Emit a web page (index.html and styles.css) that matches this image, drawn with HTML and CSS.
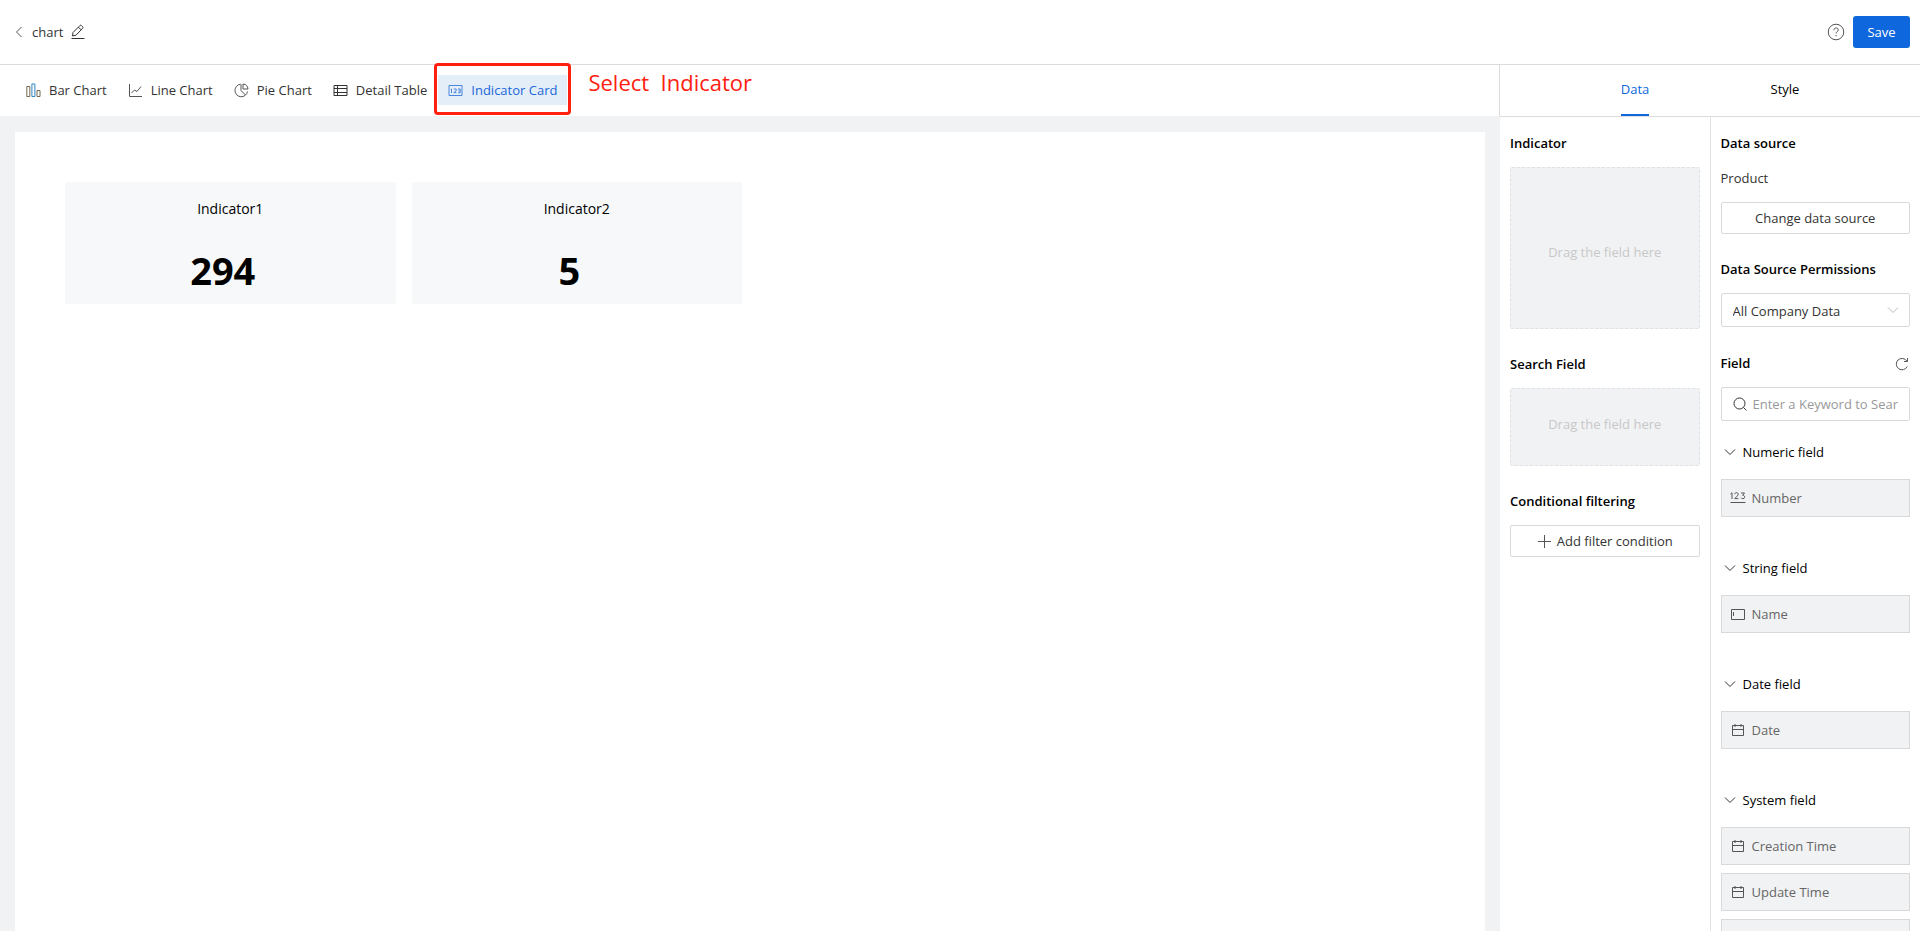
FILE: index.html
```html
<!DOCTYPE html>
<html lang="en">
<head>
    <meta charset="UTF-8">
    <meta name="viewport" content="width=device-width, initial-scale=1.0">
    <title>chart</title>
    <link rel="stylesheet" href="styles.css">
</head>
<body>
    <!-- shared icons -->
    <svg class="sprite" aria-hidden="true">
        <symbol id="icon-down" viewBox="0 0 12 12"><path d="M1 3.5l5 5 5-5"/></symbol>
        <symbol id="icon-calendar" viewBox="0 0 14 14"><path d="M1.5 2.5h11v10h-11zM1.5 6.5h11M4 1v3M10 1v3"/></symbol>
    </svg>

    <header class="header">
        <button class="icon-button" aria-label="Back">
            <svg class="icon" width="8" height="12" viewBox="0 0 8 12"><path d="M6.5 1L1.5 6l5 5"/></svg>
        </button>
        <span class="header-title">chart</span>
        <button class="icon-button" aria-label="Rename">
            <svg class="icon icon-dark" width="14" height="16" viewBox="0 0 14 16"><path d="M1.500 12l.5-3.500L9 1.500q.7-.7 1.400 0l1.300 1.300q.7.7 0 1.400L5 11.200zM7.500 3.200l2.600 2.600M.5 14.500h13"/></svg>
        </button>
        <div class="header-actions">
            <button class="icon-button" aria-label="Help">
                <svg class="icon" width="18" height="18" viewBox="0 0 18 18"><circle cx="9" cy="9" r="7.800"/><path d="M6.800 7.200c0-3 4.500-2.900 4.500-.3 0 1.700-2.200 1.700-2.200 3.600M9.100 12v1.300"/></svg>
            </button>
            <button class="save-button">Save</button>
        </div>
    </header>

    <div class="workspace">
        <main class="main">
            <nav class="toolbar">
                <button class="chart-type">
                    <svg class="icon" width="15" height="15" viewBox="0 0 15 15"><path class="bar-side" d="M.800 3.500h3v10h-3zM11 7.500h3v6h-3z"/><path class="bar-mid" d="M5.900 1h3v12.500h-3z"/></svg>
                    Bar Chart
                </button>
                <button class="chart-type">
                    <svg class="icon" width="15" height="15" viewBox="0 0 15 15"><path d="M1.500 1v12.500H14M3.500 10l3-3 2.500 1.500 4-5"/></svg>
                    Line Chart
                </button>
                <button class="chart-type">
                    <svg class="icon" width="15" height="15" viewBox="0 0 15 15"><path d="M13.500 8.500A6.300 6.300 0 1 1 6.500 1.200M7 1.200v6.300l4.500 4.500M9 1a5.500 5.500 0 0 1 5 5H9z"/></svg>
                    Pie Chart
                </button>
                <button class="chart-type">
                    <svg class="icon icon-dark" width="15" height="15" viewBox="0 0 15 15"><path d="M1 2.500h13v10H1zM1 5.500h13M1 9.500h13M4.500 2.500v10"/></svg>
                    Detail Table
                </button>
                <div class="callout">
                    <button class="chart-type active">
                        <svg class="icon" width="15" height="15" viewBox="0 0 15 15"><path d="M1 2.500h13v10H1zM3.500 6v4M2.800 6.500l.7-.5M5.800 6h2.400v1.800L5.800 9.700h2.600M10 6h2.200v3.800H10M10.500 7.800h1.700"/></svg>
                        Indicator Card
                    </button>
                    <span class="callout-frame"></span>
                    <span class="callout-text">Select  Indicator</span>
                </div>
            </nav>
            <div class="canvas">
                <section class="sheet">
                    <article class="card">
                        <h2 class="card-name">Indicator1</h2>
                        <p class="card-value">294</p>
                    </article>
                    <article class="card">
                        <h2 class="card-name">Indicator2</h2>
                        <p class="card-value">5</p>
                    </article>
                </section>
            </div>
        </main>

        <aside class="panel">
            <div class="tabs" role="tablist">
                <button class="tab" role="tab" aria-selected="true"><span class="tab-label">Data</span></button>
                <button class="tab" role="tab" aria-selected="false"><span class="tab-label">Style</span></button>
            </div>
            <div class="panel-columns">
                <div class="column">
                    <h3 class="title">Indicator</h3>
                    <div class="drop-zone drop-zone-large">Drag the field here</div>
                    <h3 class="title">Search Field</h3>
                    <div class="drop-zone">Drag the field here</div>
                    <h3 class="title">Conditional filtering</h3>
                    <button class="button">
                        <svg class="icon" width="14" height="14" viewBox="0 0 14 14"><path d="M7.500 1v13M1 7.500h13"/></svg>
                        Add filter condition
                    </button>
                </div>

                <div class="column column-source">
                    <h3 class="title">Data source</h3>
                    <p class="source-name">Product</p>
                    <button class="button">Change data source</button>
                    <label class="title" for="permissions">Data Source Permissions</label>
                    <div class="select-box">
                        <select id="permissions" class="select">
                            <option>All Company Data</option>
                        </select>
                        <svg class="icon select-arrow" width="12" height="12"><use href="#icon-down"/></svg>
                    </div>
                    <div class="title title-row">
                        <label for="search">Field</label>
                        <button class="icon-button" aria-label="Refresh">
                            <svg class="icon" width="14" height="14" viewBox="0 0 14 14"><path d="M12.200 9.500A5.700 5.700 0 1 1 11.800 4M12.500 1v3.500H9"/></svg>
                        </button>
                    </div>
                    <div class="search-box">
                        <svg class="icon icon-dark" width="14" height="14" viewBox="0 0 14 14"><circle cx="6.500" cy="6.500" r="5.500"/><path d="M10.500 10.500l3 3"/></svg>
                        <input id="search" class="search-input" type="text" placeholder="Enter a Keyword to Search">
                    </div>

                    <section class="group">
                        <button class="group-title"><svg class="icon icon-dark" width="12" height="12"><use href="#icon-down"/></svg>Numeric field</button>
                        <div class="field">
                            <svg class="icon" width="16" height="14" viewBox="0 0 16 14"><path d="M.5 3l1.500-1.200V8M4.800 3.200c0-2.200 3.400-2 3.400 0C8.200 4.500 6 6 4.800 7.600h3.600M11 2h3.500L12.600 4.300c2.800 0 2.600 3.400.3 3.400q-1.400 0-1.900-1M.5 11.500h15"/></svg>
                            Number
                        </div>
                    </section>
                    <section class="group">
                        <button class="group-title"><svg class="icon icon-dark" width="12" height="12"><use href="#icon-down"/></svg>String field</button>
                        <div class="field">
                            <svg class="icon" width="16" height="14" viewBox="0 0 16 14"><path d="M1.500 2.500h13v10h-13zM3.500 5v4"/></svg>
                            Name
                        </div>
                    </section>
                    <section class="group">
                        <button class="group-title"><svg class="icon icon-dark" width="12" height="12"><use href="#icon-down"/></svg>Date field</button>
                        <div class="field"><svg class="icon" width="16" height="14"><use href="#icon-calendar"/></svg>Date</div>
                    </section>
                    <section class="group">
                        <button class="group-title"><svg class="icon icon-dark" width="12" height="12"><use href="#icon-down"/></svg>System field</button>
                        <div class="field"><svg class="icon" width="16" height="14"><use href="#icon-calendar"/></svg>Creation Time</div>
                        <div class="field"><svg class="icon" width="16" height="14"><use href="#icon-calendar"/></svg>Update Time</div>
                        <div class="field"></div>
                    </section>
                </div>
            </div>
        </aside>
    </div>
</body>
</html>
```

FILE: styles.css
```css
* {
    box-sizing: border-box;
}
body {
    margin: 0;
    height: 100vh;
    display: flex;
    flex-direction: column;
    overflow: hidden;
    font-family: "Open Sans", "Noto Sans", sans-serif;
    font-size: 13px;
    line-height: 20px;
    color: #333;
    background: #fff;
}
button, input, select {
    font: inherit;
    color: inherit;
}
button {
    cursor: pointer;
}
h2, h3, p {
    margin: 0;
}
.sprite {
    position: absolute;
    width: 0;
    height: 0;
}
.icon {
    display: block;
    flex: none;
    fill: none;
    stroke: #555;
}
.icon-dark {
    stroke: #333;
}
.icon-button {
    padding: 0;
    border: none;
    background: none;
}

/* header */
.header {
    flex: none;
    display: flex;
    align-items: center;
    gap: 8px;
    height: 65px;
    padding: 0 10px 0 15px;
    border-bottom: 1px solid #dcdcdc;
}
.header-title {
    margin-left: 1px;
}
.header-actions {
    display: flex;
    align-items: center;
    gap: 8px;
    margin-left: auto;
}
.save-button {
    min-width: 57px;
    height: 32px;
    padding: 0 14px;
    border: none;
    border-radius: 3px;
    background: #0e67dc;
    color: #fff;
}

.workspace {
    flex: 1;
    display: flex;
    min-height: 0;
}
.main {
    flex: 1;
    display: flex;
    flex-direction: column;
    min-width: 0;
}

/* chart type toolbar */
.toolbar {
    flex: none;
    display: flex;
    align-items: center;
    gap: 1px;
    height: 51px;
    padding: 0 0 1px 16px;
    border-right: 1px solid #dcdcdc;
}
.chart-type {
    display: flex;
    align-items: center;
    gap: 8px;
    height: 30px;
    padding: 0 10px;
    border: none;
    background: none;
    white-space: nowrap;
}
.chart-type.active {
    background: #e4eef9;
    color: #1a66d9;
}
.chart-type.active .icon {
    stroke: #4a86e0;
}
.bar-side {
    stroke: #75674f;
}
.bar-mid {
    stroke: #2f86c4;
}
.callout {
    position: relative;
}
.callout-frame {
    position: absolute;
    inset: -12px -4px -10px;
    border: 3px solid #ff2010;
    border-radius: 4px;
    pointer-events: none;
}
.callout-text {
    position: absolute;
    left: 100%;
    top: -8px;
    margin-left: 21px;
    font-size: 22px;
    line-height: 30px;
    color: #ff2010;
    white-space: pre;
}

/* canvas */
.canvas {
    flex: 1;
    display: flex;
    padding: 16px 15px 0;
    background: #f1f2f4;
}
.sheet {
    flex: 1;
    display: grid;
    grid-template-columns: repeat(4, 1fr);
    align-content: start;
    gap: 16px;
    padding: 50px;
    background: #fff;
}
.card {
    height: 122px;
    padding-top: 16px;
    border-radius: 2px;
    background: #f6f8fa;
    color: #000;
    text-align: center;
}
.card-name {
    font-size: 14px;
    font-weight: 400;
    line-height: 22px;
}
.card-value {
    margin-top: 26px;
    padding-right: 15px;
    font-size: 38px;
    font-weight: 700;
    line-height: 48px;
}

/* settings panel */
.panel {
    flex: none;
    display: flex;
    flex-direction: column;
    width: 420px;
}
.tabs {
    flex: none;
    display: flex;
    justify-content: center;
    height: 52px;
    border-bottom: 1px solid #dcdcdc;
}
.tab {
    display: flex;
    justify-content: center;
    width: 150px;
    padding: 0;
    border: none;
    background: none;
    color: #000;
}
.tab-label {
    height: 51px;
    line-height: 49px;
    border-bottom: 2px solid transparent;
}
.tab[aria-selected="true"] .tab-label {
    color: #0e67dc;
    border-color: #0e67dc;
}
.panel-columns {
    flex: 1;
    display: flex;
    min-height: 0;
}
.column {
    flex: 1;
    display: flex;
    flex-direction: column;
    min-width: 0;
    padding: 16px 10px 0;
    overflow: hidden;
}
.column-source {
    border-left: 1px solid #e2e3e8;
}
.title {
    flex: none;
    margin-bottom: 13px;
    font-size: 13px;
    font-weight: 600;
    line-height: 21px;
    color: #000;
}
.title-row {
    display: flex;
    align-items: center;
    justify-content: space-between;
    padding-right: 1px;
}
.drop-zone {
    flex: none;
    display: flex;
    align-items: center;
    justify-content: center;
    height: 78px;
    margin-bottom: 25px;
    padding-bottom: 6px;
    border: 1px dashed #e0e1e6;
    border-radius: 2px;
    background: #f1f2f4;
    color: #c8c8c8;
}
.drop-zone-large {
    height: 162px;
    padding: 8px 0 0;
}
.button {
    flex: none;
    display: flex;
    align-items: center;
    justify-content: center;
    gap: 6px;
    height: 32px;
    border: 1px solid #d9d9d9;
    border-radius: 2px;
    background: #fff;
}
.source-name {
    margin-bottom: 13px;
    line-height: 22px;
}
.column-source .button {
    margin-bottom: 25px;
}
.select-box {
    flex: none;
    display: grid;
    align-items: center;
    height: 34px;
    margin-bottom: 26px;
}
.select {
    grid-area: 1 / 1;
    height: 34px;
    padding: 2px 11px 0;
    border: 1px solid #d9d9d9;
    border-radius: 2px;
    background: #fff;
    appearance: none;
}
.select-arrow {
    grid-area: 1 / 1;
    justify-self: end;
    margin-right: 11px;
    stroke: #bbb;
    pointer-events: none;
}
.search-box {
    flex: none;
    display: flex;
    align-items: center;
    gap: 6px;
    height: 34px;
    padding: 0 11px;
    border: 1px solid #d9d9d9;
    border-radius: 2px;
}
.search-input {
    flex: 1;
    min-width: 0;
    padding: 0;
    border: none;
    outline: none;
}
.search-input::placeholder {
    color: #999;
}

/* draggable fields */
.group {
    flex: none;
    display: flex;
    flex-direction: column;
    gap: 8px;
    padding-top: 20px;
    margin-bottom: 20px;
}
.group-title {
    display: flex;
    align-items: center;
    gap: 7px;
    height: 22px;
    margin-bottom: 8px;
    padding: 0 3px;
    border: none;
    background: none;
    color: #000;
}
.field {
    display: flex;
    align-items: center;
    gap: 6px;
    height: 38px;
    padding: 0 8px;
    border: 1px solid #d9d9d9;
    background: #f1f2f4;
    color: #666;
}
```
